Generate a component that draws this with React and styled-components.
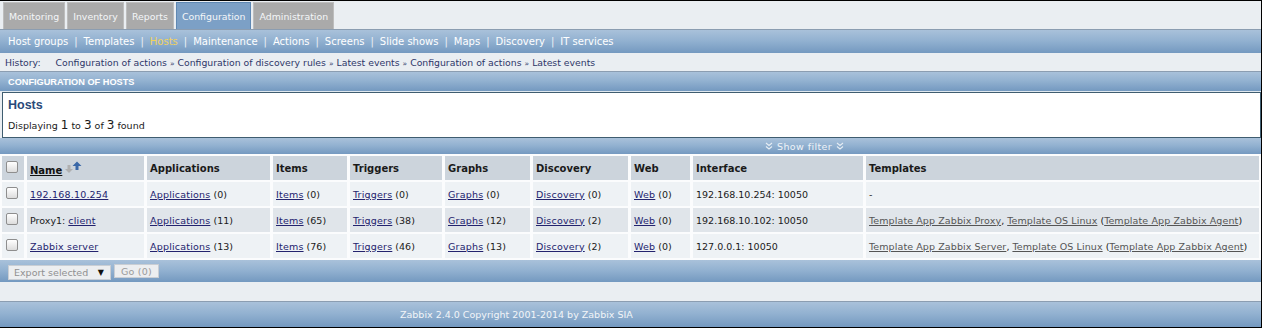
import styled, { createGlobalStyle } from 'styled-components'

const GlobalStyle = createGlobalStyle`
  html, body {
    margin: 0;
    padding: 0;
    background: #fff;
  }
  body {
    font-family: 'DejaVu Sans', Verdana, sans-serif;
    font-size: 9.5px;
    color: #1a1a1a;
  }
`

const bar = `
  background: linear-gradient(to bottom, #a9c1da 0%, #93b2d1 45%, #7499c0 100%);
`

const Page = styled.div`
  width: 1261px;
  height: 326px;
  border-top: 1px solid #000;
  border-right: 1px solid #000;
  border-bottom: 1px solid #000;
  background: #eaeef2;
  display: flex;
  flex-direction: column;
  overflow: hidden;
`

const TabRow = styled.div`
  height: 28px;
  box-sizing: border-box;
  padding: 1px 0 0 3px;
  display: flex;
  gap: 2px;
`

const Tab = styled.div`
  display: flex;
  align-items: center;
  padding: 0 5px;
  font-size: 9.4px;
  color: #f4f6f8;
  background: ${p => (p.$active ? '#7ca0c6' : '#aaaaaa')};
  border: 1px solid ${p => (p.$active ? '#5f88b3' : '#bdbdbd')};
  border-bottom: none;
`

const SubMenu = styled.div`
  height: 24px;
  box-sizing: border-box;
  border-top: 1px solid #8b9db1;
  ${bar}
  display: flex;
  align-items: center;
  padding-left: 8px;
  font-size: 10px;
  color: #fff;
`

const MenuItem = styled.span`
  color: ${p => (p.$active ? '#f1d15c' : '#fff')};
`

const Sep = styled.span`
  margin: 0 6px;
  color: #eef2f6;
`

const History = styled.div`
  height: 18px;
  display: flex;
  align-items: center;
  padding-left: 5px;
  color: #2e3669;
  font-size: 9.3px;
`

const HistoryLabel = styled.span`
  margin-right: 15px;
`

const Raquo = styled.span`
  margin: 0 3px;
  font-size: 7.5px;
`

const TitleBar = styled.div`
  height: 21px;
  box-sizing: border-box;
  border-top: 1px solid #8b9db1;
  ${bar}
  border-bottom: 1px solid #dfe8ef;
  display: flex;
  align-items: center;
  padding-left: 8px;
  font-family: 'Liberation Sans', Arial, sans-serif;
  font-weight: bold;
  color: #fff;
  font-size: 9.2px;
`

const Box = styled.div`
  height: 46px;
  box-sizing: border-box;
  margin-left: 2px;
  border: 1px solid #3f5d70;
  background: #fff;
  padding: 5px 0 0 5px;
`

const BoxTitle = styled.div`
  font-family: 'Liberation Sans', Arial, sans-serif;
  font-weight: bold;
  font-size: 12.5px;
  color: #294a7a;
  height: 20px;
`

const Counter = styled.div`
  color: #1a1a1a;
  font-size: 9.5px;
`

const Big = styled.span`
  font-size: 12px;
`

const FilterBar = styled.div`
  height: 16px;
  ${bar}
  display: flex;
  align-items: center;
  padding-left: 765px;
  gap: 4px;
  color: #eef3f8;
  font-size: 9.5px;
  letter-spacing: 0.4px;
`

const Table = styled.table`
  width: calc(100% + 2px);
  margin: 0 -1px;
  border-collapse: separate;
  border-spacing: 3px 2px;
  table-layout: fixed;
  background: #fbfcfd;
`

const Th = styled.th`
  height: 24px;
  padding: 0 3px;
  background: #ccd4dc;
  text-align: left;
  font-weight: bold;
  font-size: 10px;
  color: #1a1a1a;
  vertical-align: middle;
  white-space: nowrap;
`

const Td = styled.td`
  height: 24px;
  padding: 0 3px;
  background: ${p => (p.$odd ? '#e0e5ea' : '#eef2f5')};
  vertical-align: middle;
  white-space: nowrap;
  overflow: hidden;
`

const Link = styled.a`
  color: ${p => (p.$muted ? '#555' : '#23236e')};
  text-decoration: underline;
  letter-spacing: ${p => (p.$muted ? '0.1px' : '0.2px')};
`

const HeadLink = styled.a`
  color: #111;
  text-decoration: underline;
`

const Check = styled.span`
  display: inline-block;
  width: 10px;
  height: 10px;
  border: 1px solid #8e8e8e;
  border-radius: 2px;
  background: linear-gradient(to bottom, #ffffff, #dcdcdc);
  vertical-align: middle;
  margin: -4px 0 0 1px;
`

const ActionBar = styled.div`
  height: 22px;
  box-sizing: border-box;
  ${bar}
  display: flex;
  align-items: center;
  padding-left: 8px;
  gap: 3px;
`

const Select = styled.div`
  width: 103px;
  height: 15px;
  box-sizing: border-box;
  background: #eceef0;
  border: 1px solid #c9ced4;
  display: flex;
  align-items: center;
  justify-content: space-between;
  padding: 0 6px 0 5px;
  color: #909090;
  font-size: 9.5px;
  margin-top: 2px;
`

const Arrow = styled.span`
  color: #111;
  font-size: 8px;
`

const Button = styled.div`
  height: 14px;
  box-sizing: border-box;
  padding: 0 6px;
  background: #eceef0;
  border: 1px solid #c9ced4;
  color: #9a9a9a;
  display: flex;
  align-items: center;
  font-size: 9.5px;
  letter-spacing: 0.2px;
`

const Gap = styled.div`
  height: 19px;
`

const Footer = styled.div`
  height: 26px;
  box-sizing: border-box;
  border-top: 1px solid #8b9db1;
  ${bar}
  display: flex;
  align-items: center;
  padding-left: 400px;
  color: #f2f5f8;
  font-size: 9.5px;
`

const SortIcon = () => (
  <svg width="17" height="13" viewBox="0 0 17 13" style={{ marginLeft: 3, verticalAlign: 0 }}>
    <path d="M2.5 4h3v4h2.5l-4 4-4-4h2.5z" fill="#b0b0b0" />
    <path d="M12 0.5l4.5 4.5h-3v4h-3V5h-3z" fill="#3a68a8" />
  </svg>
)

const Chevrons = () => (
  <svg width="8" height="8" viewBox="0 0 8 8">
    <path d="M1 1l3 2.5L7 1M1 4.5l3 2.5 3-2.5" stroke="#e6edf4" strokeWidth="1.1" fill="none" />
  </svg>
)

const menu = ['Host groups', 'Templates', 'Hosts', 'Maintenance', 'Actions', 'Screens', 'Slide shows', 'Maps', 'Discovery', 'IT services']
const history = ['Configuration of actions', 'Configuration of discovery rules', 'Latest events', 'Configuration of actions', 'Latest events']
const widths = [22, 117, 123, 74, 92, 85, 95, 59, 170, null]

const hosts = [
  { name: '192.168.10.254', apps: 0, items: 0, triggers: 0, graphs: 0, disc: 0, web: 0, iface: '192.168.10.254: 10050', templates: null },
  { proxy: 'Proxy1: ', name: 'client', apps: 11, items: 65, triggers: 38, graphs: 12, disc: 2, web: 0, iface: '192.168.10.102: 10050', templates: 'Template App Zabbix Proxy' },
  { name: 'Zabbix server', apps: 13, items: 76, triggers: 46, graphs: 13, disc: 2, web: 0, iface: '127.0.0.1: 10050', templates: 'Template App Zabbix Server' },
]

export default function App() {
  return (
    <>
      <GlobalStyle />
      <Page>
        <TabRow>
          <Tab>Monitoring</Tab>
          <Tab>Inventory</Tab>
          <Tab>Reports</Tab>
          <Tab $active>Configuration</Tab>
          <Tab>Administration</Tab>
        </TabRow>
        <SubMenu>
          {menu.map((m, i) => (
            <span key={m}>
              {i > 0 && <Sep>|</Sep>}
              <MenuItem $active={m === 'Hosts'}>{m}</MenuItem>
            </span>
          ))}
        </SubMenu>
        <History>
          <HistoryLabel>History:</HistoryLabel>
          {history.map((h, i) => (
            <span key={i}>
              {i > 0 && <Raquo>»</Raquo>}
              {h}
            </span>
          ))}
        </History>
        <TitleBar>CONFIGURATION OF HOSTS</TitleBar>
        <Box>
          <BoxTitle>Hosts</BoxTitle>
          <Counter>
            Displaying <Big>1</Big> to <Big>3</Big> of <Big>3</Big> found
          </Counter>
        </Box>
        <FilterBar>
          <Chevrons />
          Show filter
          <Chevrons />
        </FilterBar>
        <Table>
          <colgroup>
            {widths.map((w, i) => (
              <col key={i} style={w ? { width: w } : undefined} />
            ))}
          </colgroup>
          <thead>
            <tr>
              <Th><Check /></Th>
              <Th><HeadLink>Name</HeadLink><SortIcon /></Th>
              <Th>Applications</Th>
              <Th>Items</Th>
              <Th>Triggers</Th>
              <Th>Graphs</Th>
              <Th>Discovery</Th>
              <Th>Web</Th>
              <Th>Interface</Th>
              <Th>Templates</Th>
            </tr>
          </thead>
          <tbody>
            {hosts.map((h, i) => {
              const odd = i % 2 === 1
              return (
                <tr key={i}>
                  <Td $odd={odd}><Check /></Td>
                  <Td $odd={odd}>{h.proxy}<Link>{h.name}</Link></Td>
                  <Td $odd={odd}><Link>Applications</Link> ({h.apps})</Td>
                  <Td $odd={odd}><Link>Items</Link> ({h.items})</Td>
                  <Td $odd={odd}><Link>Triggers</Link> ({h.triggers})</Td>
                  <Td $odd={odd}><Link>Graphs</Link> ({h.graphs})</Td>
                  <Td $odd={odd}><Link>Discovery</Link> ({h.disc})</Td>
                  <Td $odd={odd}><Link>Web</Link> ({h.web})</Td>
                  <Td $odd={odd}>{h.iface}</Td>
                  <Td $odd={odd}>
                    {h.templates ? (
                      <>
                        <Link $muted>{h.templates}</Link>, <Link $muted>Template OS Linux</Link> (
                        <Link $muted>Template App Zabbix Agent</Link>)
                      </>
                    ) : (
                      '-'
                    )}
                  </Td>
                </tr>
              )
            })}
          </tbody>
        </Table>
        <ActionBar>
          <Select>
            Export selected
            <Arrow>▼</Arrow>
          </Select>
          <Button>Go (0)</Button>
        </ActionBar>
        <Gap />
        <Footer>Zabbix 2.4.0 Copyright 2001-2014 by Zabbix SIA</Footer>
      </Page>
    </>
  )
}
